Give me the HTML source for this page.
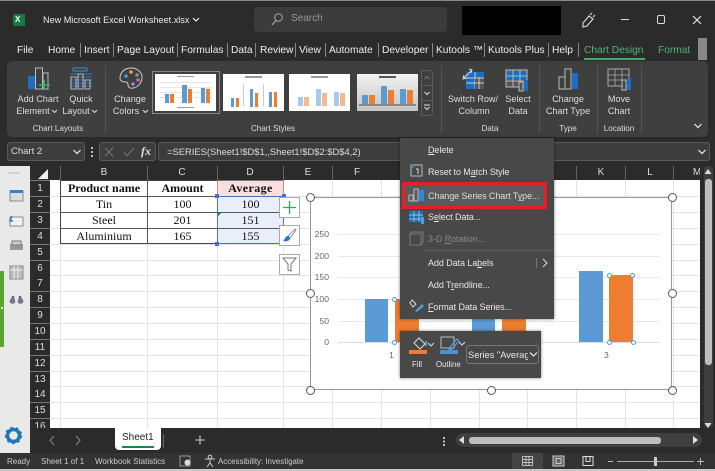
<!DOCTYPE html>
<html><head><meta charset="utf-8"><style>
*{box-sizing:border-box}
html,body{margin:0;padding:0}
body{width:715px;height:471px;overflow:hidden;position:relative;background:#2b2b2b;font-family:"Liberation Sans",sans-serif;color:#e8e8e8}
div,span,svg{position:absolute}
.t{white-space:nowrap;font-size:9px;line-height:12px}
.tab{white-space:nowrap;font-size:10.2px;line-height:13px;top:44px;color:#eee}
.sep{width:1px;height:14px;top:43px;background:#888}
.rs{width:1px;background:#555;top:65px;height:68px}
.lb{white-space:nowrap;font-size:8.1px;line-height:12px;top:123px;color:#ddd;transform:translateX(-50%)}
.rl{white-space:nowrap;font-size:9.1px;line-height:12px;color:#ddd;text-align:center;transform:translateX(-50%)}
.rh{left:30px;width:20px;height:15px;background:#2b2b2b;color:#ddd;text-align:center;font-size:10px;line-height:15px}
.ch{top:166px;font-size:10px;line-height:14px;color:#ddd;transform:translateX(-50%)}
.cs{top:166px;width:1px;height:14px;background:#666}
.hg{left:50px;width:650px;height:1px;background:#e4e4e4}
.vg{top:180px;width:1px;height:248px;background:#e4e4e4}
.cell{font-family:"Liberation Serif",serif;color:#111;font-size:12px;line-height:15px;text-align:center;height:16px;white-space:nowrap}
.h{font-weight:bold}
.bl{background:#5b9bd5}.or{background:#ed7d31}
.hd{width:9px;height:9px;border-radius:50%;background:#fff;border:1.5px solid #555}
.sd{width:5px;height:5px;border-radius:50%;background:#fff;border:1px solid #4a9fe0}
.ax{font-size:8.6px;line-height:11px;color:#666;text-align:right;width:24px;left:305px}
.gl{left:338px;width:322px;height:1px;background:#e8e8e8}
.mi{left:428px;font-size:9px;letter-spacing:-.08px;line-height:12px;color:#e6e6e6;white-space:nowrap}
.th{top:74px;height:37px;width:61px;background:#fff;overflow:hidden}
.g{height:1px;left:5px;width:52px;background:#e6e6e6}
.tt{left:22px;top:2px;width:17px;height:1px;background:#999}
u{text-decoration:underline}
</style></head><body>
<div style="left:0;top:0;width:715px;height:1px;background:#888"></div>
<!-- title -->
<div style="left:13px;top:14px;width:12px;height:12px;background:#107c41;border-radius:1px"></div>
<div class="t" style="left:15px;top:14px;font-size:8px;font-weight:bold;color:#fff">X</div>
<div class="t" style="left:43px;top:14px;font-size:9.1px;color:#ececec">New Microsoft Excel Worksheet.xlsx</div>
<svg style="left:191px;top:16px" width="10" height="8"><path d="M2 2l3 3 3-3" fill="none" stroke="#eee" stroke-width="1.2"/></svg>
<div style="left:254px;top:7px;width:193px;height:25px;background:#3b3b3b;border-radius:4px"></div>
<svg style="left:270px;top:12px" width="14" height="15"><circle cx="8.500" cy="5.500" r="3.800" fill="none" stroke="#aaa"/><path d="M6 8.500l-4 4.500" stroke="#aaa" stroke-width="1.200"/></svg>
<div class="t" style="left:291px;top:13px;font-size:10px;color:#999">Search</div>
<div style="left:462px;top:6px;width:99px;height:29px;background:#000"></div>
<svg style="left:580px;top:12px" width="16" height="16"><path d="M3 11l6-7 4 3-6 7-4 1zM10 3l2-2M13 5l2-2" fill="none" stroke="#ddd" stroke-width="1.100"/></svg>
<div style="left:621px;top:19px;width:8px;height:1px;background:#ddd"></div>
<div style="left:657px;top:15px;width:8px;height:9px;border:1.200px solid #ddd;border-radius:2px"></div>
<svg style="left:692px;top:15px" width="10" height="10"><path d="M1 1l8 8M9 1l-8 8" stroke="#eee" stroke-width="1.100"/></svg>
<!-- tabs -->
<div class="tab" style="left:17px">File</div><div class="tab" style="left:48px">Home</div><div class="sep" style="left:80px"></div>
<div class="tab" style="left:84px">Insert</div><div class="sep" style="left:113px"></div>
<div class="tab" style="left:117px">Page Layout</div><div class="sep" style="left:177px"></div>
<div class="tab" style="left:181px">Formulas</div><div class="sep" style="left:227px"></div>
<div class="tab" style="left:231px">Data</div><div class="sep" style="left:255px"></div>
<div class="tab" style="left:260px">Review</div><div class="sep" style="left:295px"></div>
<div class="tab" style="left:299px">View</div><div class="sep" style="left:325px"></div>
<div class="tab" style="left:329px">Automate</div><div class="sep" style="left:378px"></div>
<div class="tab" style="left:382px">Developer</div><div class="sep" style="left:432px"></div>
<div class="tab" style="left:436px">Kutools ™</div><div class="sep" style="left:484px"></div>
<div class="tab" style="left:488px">Kutools Plus</div><div class="sep" style="left:548px"></div>
<div class="tab" style="left:552px">Help</div><div class="sep" style="left:578px"></div>
<div class="tab" style="left:584px;color:#4fb477">Chart Design</div>
<div style="left:584px;top:58px;width:61px;height:2px;background:#45a86c"></div>
<div class="tab" style="left:658px;color:#4fb477">Format</div>
<div style="left:698px;top:38px;width:9px;height:22px;background:#888"></div>
<!-- ribbon -->
<div style="left:7px;top:61px;width:701px;height:76px;background:#3f3f3f;border-radius:6px"></div>
<div class="rs" style="left:105px"></div><div class="rs" style="left:441px"></div><div class="rs" style="left:539px"></div><div class="rs" style="left:597px"></div><div class="rs" style="left:641px"></div>
<!-- ribbon icons -->
<svg style="left:26px;top:66px" width="26" height="26"><rect x="2" y="10" width="7" height="13" fill="#1a6fc4"/><rect x="9.500" y="2" width="7" height="21" fill="none" stroke="#bbb"/><rect x="17" y="7" width="5" height="16" fill="none" stroke="#bbb"/><path d="M18 14v10M13 19h11" stroke="#3cb371" stroke-width="1.600"/></svg>
<svg style="left:68px;top:66px" width="26" height="26"><rect x="5" y="2" width="14" height="3" fill="none" stroke="#3b8fdc"/><path d="M2 8h22M2 11h22M2 14h22M2 17h22M2 20h22" stroke="#2e7ec9" stroke-width=".9"/><rect x="3" y="11" width="5" height="12" fill="none" stroke="#bbb"/><rect x="10" y="8" width="5" height="15" fill="none" stroke="#bbb"/><rect x="17" y="14" width="5" height="9" fill="none" stroke="#bbb"/></svg>
<svg style="left:118px;top:66px" width="26" height="26"><path d="M13 2C6 2 2 7 2 12c0 4 4 4 6 4 2 0 2 2 2 3 0 2 2 4 5 3 6-1 9-6 9-11 0-5-5-9-11-9z" fill="none" stroke="#ccc"/><circle cx="8" cy="10" r="1.800" fill="#4a9fe0"/><circle cx="13" cy="6" r="1.800" fill="#f0a040"/><circle cx="19" cy="9" r="1.800" fill="#60b060"/><circle cx="20" cy="14" r="1.800" fill="#d060c0"/><circle cx="15" cy="18" r="1.800" fill="#b070e0"/></svg>
<div class="rl" style="left:38px;top:93px">Add Chart</div><div class="rl" style="left:33px;top:105px">Element</div>
<svg style="left:51px;top:109px" width="7" height="5"><path d="M1 1l2.500 2.500L6 1" fill="none" stroke="#ddd"/></svg>
<div class="rl" style="left:81px;top:93px">Quick</div><div class="rl" style="left:76px;top:105px">Layout</div>
<svg style="left:91px;top:109px" width="7" height="5"><path d="M1 1l2.500 2.500L6 1" fill="none" stroke="#ddd"/></svg>
<div class="rl" style="left:130px;top:93px">Change</div><div class="rl" style="left:126px;top:105px">Colors</div>
<svg style="left:142px;top:109px" width="7" height="5"><path d="M1 1l2.500 2.500L6 1" fill="none" stroke="#ddd"/></svg>
<div class="lb" style="left:58px">Chart Layouts</div><div class="lb" style="left:273px">Chart Styles</div><div class="lb" style="left:490px">Data</div><div class="lb" style="left:568px">Type</div><div class="lb" style="left:619px">Location</div>
<!-- gallery -->
<div style="left:152px;top:71px;width:68px;height:43px;border:1.500px solid #888"></div>
<div class="th" style="left:155px"><span class="tt"></span><span class="g" style="top:8px"></span><span class="g" style="top:13px"></span><span class="g" style="top:18px"></span><span class="g" style="top:23px"></span><span class="bl" style="left:10px;top:20px;width:4px;height:9px"></span><span class="or" style="left:15px;top:20px;width:4px;height:9px"></span><span class="bl" style="left:27px;top:11px;width:5px;height:18px"></span><span class="or" style="left:33px;top:15px;width:4px;height:14px"></span><span class="bl" style="left:46px;top:14px;width:4px;height:15px"></span><span class="or" style="left:51px;top:15px;width:4px;height:14px"></span><span class="tt" style="top:33px"></span></div>
<div class="th" style="left:223px"><span class="tt" style="height:2px"></span><span style="left:20px;top:10px;width:1px;height:22px;background:#ccc"></span><span style="left:40px;top:10px;width:1px;height:22px;background:#ccc"></span><span class="bl" style="left:8px;top:24px;width:3px;height:9px"></span><span class="or" style="left:13px;top:24px;width:3px;height:9px"></span><span class="bl" style="left:27px;top:15px;width:3px;height:18px"></span><span class="or" style="left:32px;top:19px;width:3px;height:14px"></span><span class="bl" style="left:46px;top:18px;width:3px;height:15px"></span><span class="or" style="left:51px;top:18px;width:3px;height:15px"></span></div>
<div class="th" style="left:289px"><span class="tt" style="height:2px"></span><span style="left:9px;top:23px;width:5px;height:9px;background:#a8cbea"></span><span style="left:15px;top:23px;width:5px;height:9px;background:#f5b98c"></span><span style="left:27px;top:15px;width:5px;height:17px;background:#a8cbea"></span><span style="left:33px;top:19px;width:5px;height:13px;background:#f5b98c"></span><span style="left:45px;top:18px;width:5px;height:14px;background:#a8cbea"></span><span style="left:51px;top:19px;width:5px;height:13px;background:#f5b98c"></span></div>
<div class="th" style="left:357px;background:linear-gradient(#f2f2f2,#c4c4c4)"><span class="tt" style="height:2px;background:#555"></span><span class="bl" style="left:5px;top:21px;width:6px;height:9px"></span><span class="or" style="left:12px;top:21px;width:6px;height:9px"></span><span class="bl" style="left:24px;top:12px;width:6px;height:18px"></span><span class="or" style="left:31px;top:16px;width:6px;height:14px"></span><span class="bl" style="left:43px;top:15px;width:6px;height:15px"></span><span class="or" style="left:50px;top:16px;width:6px;height:14px"></span><span style="left:2px;top:30px;width:57px;height:2px;background:#888"></span></div>
<div style="left:421px;top:70px;width:12px;height:46px;border:1px solid #5c5c5c;border-radius:0 4px 4px 0"></div>
<div style="left:421px;top:85px;width:12px;height:1px;background:#5c5c5c"></div><div style="left:421px;top:100px;width:12px;height:1px;background:#5c5c5c"></div>
<svg style="left:421px;top:72px" width="12" height="44"><path d="M3.500 7l2.500-2.500 2.500 2.500" fill="none" stroke="#777"/><path d="M3.500 20l2.500 2.500 2.500-2.500" fill="none" stroke="#ddd"/><path d="M3 33h6M3.500 35l2.500 2.500 2.500-2.500" fill="none" stroke="#ddd"/></svg>
<svg style="left:461px;top:66px" width="26" height="26"><rect x="5" y="6" width="18" height="17" fill="#1a6fc4"/><path d="M5 12h18M5 17h18M14 6v17" stroke="#ccc"/><rect x="14" y="12" width="9" height="11" fill="#555"/><path d="M14 12h9M14 17h9M18 12v11" stroke="#ccc" fill="none"/><path d="M3 12l8-8M8 3l3 1-1 3M3 9l-1 4 4-1" fill="none" stroke="#ddd"/></svg>
<svg style="left:505px;top:68px" width="26" height="24"><rect x="1" y="2" width="21" height="17" fill="#555" stroke="#bbb"/><rect x="2" y="3" width="19" height="9" fill="#1a6fc4"/><path d="M1 8h21M1 13h21M8 2v17M15 2v17" stroke="#ccc" stroke-width=".8"/><rect x="14" y="14" width="4" height="9" fill="#555" stroke="#bbb"/><rect x="19" y="12" width="4" height="11" fill="#1a6fc4"/></svg>
<svg style="left:557px;top:67px" width="24" height="24"><rect x="2" y="10" width="6" height="12" fill="none" stroke="#bbb"/><rect x="8" y="2" width="6" height="20" fill="none" stroke="#bbb"/><rect x="15" y="6" width="6" height="16" fill="#1a6fc4"/></svg>
<svg style="left:607px;top:67px" width="26" height="25"><rect x="1" y="2" width="21" height="17" fill="none" stroke="#aaa"/><path d="M1 8h21M1 13h21M8 2v17M15 2v17" stroke="#aaa" stroke-width=".8"/><rect x="15" y="13" width="4" height="10" fill="#444" stroke="#bbb"/><rect x="20" y="11" width="4" height="12" fill="#1a6fc4"/></svg>
<div class="rl" style="left:473px;top:93px">Switch Row/</div><div class="rl" style="left:474px;top:105px">Column</div>
<div class="rl" style="left:518px;top:93px">Select</div><div class="rl" style="left:518px;top:105px">Data</div>
<div class="rl" style="left:568px;top:93px">Change</div><div class="rl" style="left:568px;top:105px">Chart Type</div>
<div class="rl" style="left:619px;top:93px">Move</div><div class="rl" style="left:619px;top:105px">Chart</div>
<svg style="left:693px;top:122px" width="10" height="8"><path d="M1.500 2l3.500 3.500L8.500 2" fill="none" stroke="#eee" stroke-width="1.200"/></svg>
<!-- formula bar -->
<div style="left:0;top:137px;width:715px;height:29px;background:#2b2b2b"></div>
<div style="left:7px;top:142px;width:78px;height:19px;background:#3d3d3d;border:1px solid #5a5a5a;border-radius:3px"></div>
<div class="t" style="left:11px;top:146px;font-size:9.500px;color:#ddd">Chart 2</div>
<svg style="left:72px;top:148px" width="10" height="8"><path d="M1.500 2l3.500 3.500L8.500 2" fill="none" stroke="#eee" stroke-width="1.200"/></svg>
<div style="left:91px;top:147px;width:2px;height:2px;background:#bbb;box-shadow:0 4px #bbb,0 8px #bbb"></div>
<div style="left:99px;top:142px;width:57px;height:19px;background:#3d3d3d;border:1px solid #5a5a5a;border-radius:3px"></div>
<svg style="left:103px;top:146px" width="34" height="12"><path d="M2 2l8 8M10 2l-8 8" stroke="#777"/><path d="M21 6l3 4 7-8" fill="none" stroke="#777"/></svg>
<div class="t" style="left:141px;top:145px;font-family:'Liberation Serif',serif;font-style:italic;font-size:12px;color:#ddd;font-weight:bold">fx</div>
<div style="left:158px;top:142px;width:552px;height:19px;background:#3d3d3d;border:1px solid #5a5a5a;border-radius:3px"></div>
<div class="t" style="left:167px;top:146px;font-size:9.400px;color:#ddd">=SERIES(Sheet1!$D$1,,Sheet1!$D$2:$D$4,2)</div>
<svg style="left:697px;top:148px" width="10" height="8"><path d="M1.500 2l3.500 3.500L8.500 2" fill="none" stroke="#eee" stroke-width="1.200"/></svg>
<!-- grid -->
<div style="left:50px;top:180px;width:650px;height:248px;background:#fff"></div>
<div class="hg" style="top:196px"></div><div class="hg" style="top:212px"></div><div class="hg" style="top:228px"></div><div class="hg" style="top:244px"></div><div class="hg" style="top:260px"></div><div class="hg" style="top:275px"></div><div class="hg" style="top:291px"></div><div class="hg" style="top:307px"></div><div class="hg" style="top:323px"></div><div class="hg" style="top:339px"></div><div class="hg" style="top:355px"></div><div class="hg" style="top:371px"></div><div class="hg" style="top:386px"></div><div class="hg" style="top:402px"></div><div class="hg" style="top:418px"></div>
<div class="vg" style="left:60px"></div><div class="vg" style="left:147px"></div><div class="vg" style="left:217px"></div><div class="vg" style="left:283px"></div><div class="vg" style="left:332px"></div><div class="vg" style="left:381px"></div><div class="vg" style="left:430px"></div><div class="vg" style="left:479px"></div><div class="vg" style="left:527px"></div><div class="vg" style="left:576px"></div><div class="vg" style="left:625px"></div><div class="vg" style="left:673px"></div>
<!-- headers -->
<div style="left:30px;top:166px;width:670px;height:14px;background:#2b2b2b"></div>
<div style="left:30px;top:180px;width:20px;height:248px;background:#777"></div>
<svg style="left:38px;top:169px" width="11" height="11"><path d="M0 10L10 0v10z" fill="#eee"/></svg>
<div class="cs" style="left:60px"></div><div class="cs" style="left:147px"></div><div class="cs" style="left:217px"></div><div class="cs" style="left:283px"></div><div class="cs" style="left:332px"></div><div class="cs" style="left:576px"></div><div class="cs" style="left:625px"></div><div class="cs" style="left:673px"></div>
<div class="ch" style="left:104px">B</div><div class="ch" style="left:182px">C</div><div class="ch" style="left:250px">D</div><div class="ch" style="left:308px">E</div><div class="ch" style="left:357px">F</div><div class="ch" style="left:601px">K</div><div class="ch" style="left:650px">L</div><div class="ch" style="left:697px">M</div>
<div class="rh" style="top:181px">1</div><div class="rh" style="top:197px">2</div><div class="rh" style="top:213px">3</div><div class="rh" style="top:229px">4</div><div class="rh" style="top:245px">5</div><div class="rh" style="top:261px">6</div><div class="rh" style="top:276px">7</div><div class="rh" style="top:292px">8</div><div class="rh" style="top:308px">9</div><div class="rh" style="top:324px">10</div><div class="rh" style="top:340px">11</div><div class="rh" style="top:356px">12</div><div class="rh" style="top:372px">13</div><div class="rh" style="top:387px">14</div><div class="rh" style="top:403px">15</div><div class="rh" style="top:419px;height:9px;overflow:hidden">16</div>
<!-- side panel -->
<div style="left:0;top:166px;width:30px;height:287px;background:#e9e9e9"></div>
<div style="left:8px;top:172px;width:12px;height:2px;background:#d4d4d4"></div>
<div style="left:0;top:271px;width:4px;height:76px;background:#5ea52d"></div>
<div style="left:1px;top:307px;width:2px;height:2px;background:#fff"></div>
<svg style="left:7px;top:187px" width="20" height="120"><rect x="3" y="4" width="13" height="10" fill="#ddd" stroke="#8a8a8a"/><rect x="3" y="3" width="13" height="3" fill="#3d7cc9"/><rect x="3" y="30" width="13" height="9" fill="#f2f2f2" stroke="#8a8a8a"/><path d="M5 29l-2 5h3" fill="none" stroke="#2e7ec9" stroke-width="1.500"/><rect x="3" y="57" width="13" height="6" fill="#999"/><rect x="5" y="54" width="9" height="4" fill="#ccc" stroke="#777"/><rect x="3" y="79" width="13" height="13" fill="#bbb" stroke="#888"/><path d="M7 79v13M11 79v13M3 83h13" stroke="#eee"/><path d="M3 116l2-7h2l1 7zM11 116l1-7h2l2 7z" fill="#667"/><circle cx="5.500" cy="114" r="2.800" fill="#778"/><circle cx="13.500" cy="114" r="2.800" fill="#778"/></svg>
<svg style="left:4px;top:426px" width="19" height="19"><circle cx="9.500" cy="9.500" r="6" fill="none" stroke="#1f78b4" stroke-width="3.500"/><circle cx="9.500" cy="9.500" r="8" fill="none" stroke="#1f78b4" stroke-width="1.500" stroke-dasharray="2.500 3.200"/></svg>
<!-- table -->
<div style="left:217px;top:181px;width:67px;height:15px;background:#fadfdf"></div>
<div style="left:217px;top:196px;width:67px;height:48px;background:#e9eef8"></div>
<div style="left:60px;top:180px;width:224px;height:64px;border:1px solid #444"></div>
<div style="left:60px;top:196px;width:157px;height:1px;background:#555"></div><div style="left:60px;top:212px;width:224px;height:1px;background:#555"></div><div style="left:60px;top:228px;width:224px;height:1px;background:#555"></div>
<div style="left:147px;top:180px;width:1px;height:64px;background:#555"></div>
<div style="left:217px;top:180px;width:1px;height:16px;background:#e08a8a"></div><div style="left:283px;top:180px;width:1px;height:16px;background:#e08a8a"></div><div style="left:217px;top:180px;width:67px;height:1px;background:#777"></div>
<div style="left:217px;top:196px;width:67px;height:48px;border:1.500px solid #4472c4"></div>
<div class="cell h" style="left:61px;top:181px;width:86px">Product name</div><div class="cell h" style="left:148px;top:181px;width:69px">Amount</div><div class="cell h" style="left:218px;top:181px;width:65px;letter-spacing:.4px">Average</div>
<div class="cell" style="left:61px;top:197px;width:86px">Tin</div><div class="cell" style="left:148px;top:197px;width:69px">100</div><div class="cell" style="left:218px;top:197px;width:65px">100</div>
<div class="cell" style="left:61px;top:213px;width:86px">Steel</div><div class="cell" style="left:148px;top:213px;width:69px">201</div><div class="cell" style="left:218px;top:213px;width:65px">151</div>
<div class="cell" style="left:61px;top:229px;width:86px">Aluminium</div><div class="cell" style="left:148px;top:229px;width:69px">165</div><div class="cell" style="left:218px;top:229px;width:65px">155</div>
<svg style="left:218px;top:212px" width="5" height="5"><path d="M0 0h4L0 4z" fill="#107c41"/></svg>
<div style="left:215px;top:194px;width:4px;height:4px;background:#4472c4"></div><div style="left:282px;top:194px;width:4px;height:4px;background:#4472c4"></div><div style="left:215px;top:242px;width:4px;height:4px;background:#4472c4"></div>
<!-- chart buttons -->
<div style="left:279px;top:197px;width:21px;height:21px;background:#fff;border:1px solid #aaa"></div>
<svg style="left:279px;top:197px" width="21" height="21"><path d="M10.500 4v13M4 10.500h13" stroke="#2fa84f" stroke-width="1.300"/></svg>
<div style="left:279px;top:225px;width:21px;height:21px;background:#fff;border:1px solid #aaa"></div>
<svg style="left:279px;top:225px" width="21" height="21"><path d="M16 4l-7 7 2 2 6-8z" fill="#fff" stroke="#777" stroke-width=".8"/><path d="M9 11c-3 0-3 4-5 5 3 1 7 0 7-3z" fill="#1f78d0"/></svg>
<div style="left:279px;top:254px;width:21px;height:21px;background:#fff;border:1px solid #aaa"></div>
<svg style="left:279px;top:254px" width="21" height="21"><path d="M4 4h13l-5 6v7l-3-1v-6z" fill="#fff" stroke="#777"/></svg>
<!-- chart -->
<div style="left:310px;top:197px;width:362px;height:193px;background:#fff;border:1px solid #999"></div>
<div class="gl" style="top:234px"></div><div class="gl" style="top:256px"></div><div class="gl" style="top:277px"></div><div class="gl" style="top:299px"></div><div class="gl" style="top:321px"></div><div class="gl" style="top:342px;background:#ddd"></div>
<div class="ax" style="top:229px">250</div><div class="ax" style="top:251px">200</div><div class="ax" style="top:272px">150</div><div class="ax" style="top:294px">100</div><div class="ax" style="top:316px">50</div><div class="ax" style="top:337px">0</div>
<div class="bl" style="left:365px;top:299px;width:23px;height:43px"></div><div class="or" style="left:395px;top:299px;width:24px;height:43px"></div>
<div class="bl" style="left:472px;top:300px;width:23px;height:42px"></div><div class="or" style="left:502px;top:300px;width:24px;height:42px"></div>
<div class="bl" style="left:579px;top:271px;width:24px;height:71px"></div><div class="or" style="left:609px;top:275px;width:24px;height:67px"></div>
<div class="t" style="left:389px;top:349px;font-size:8.600px;color:#666">1</div><div class="t" style="left:604px;top:349px;font-size:8.600px;color:#666">3</div>
<div class="hd" style="left:306px;top:193px"></div><div class="hd" style="left:668px;top:193px"></div><div class="hd" style="left:306px;top:289px"></div><div class="hd" style="left:668px;top:289px"></div><div class="hd" style="left:306px;top:386px"></div><div class="hd" style="left:487px;top:386px"></div><div class="hd" style="left:668px;top:386px"></div>
<div class="sd" style="left:392px;top:297px"></div><div class="sd" style="left:392px;top:340px"></div><div class="sd" style="left:607px;top:273px"></div><div class="sd" style="left:630px;top:273px"></div><div class="sd" style="left:607px;top:340px"></div><div class="sd" style="left:631px;top:340px"></div>
<!-- context menu -->
<div style="left:400px;top:138px;width:154px;height:181px;background:#484848;box-shadow:0 0 3px rgba(0,0,0,.5)"></div>
<div style="left:404px;top:184px;width:140px;height:23px;background:#5a5a5a"></div>
<div class="mi" style="top:144px"><u>D</u>elete</div>
<div class="mi" style="top:166px">Reset to M<u>a</u>tch Style</div>
<div class="mi" style="top:190px;color:#ddd">Change Series Chart T<u>y</u>pe...</div>
<div class="mi" style="top:211px">S<u>e</u>lect Data...</div>
<div class="mi" style="top:233px;color:#888">3-D <u>R</u>otation...</div>
<div style="left:425px;top:250px;width:129px;height:1px;background:#5f5f5f"></div>
<div class="mi" style="top:257px">Add Data La<u>b</u>els</div>
<div class="mi" style="top:279px">Add T<u>r</u>endline...</div>
<div class="mi" style="top:301px"><u>F</u>ormat Data Series...</div>
<div style="left:536px;top:258px;width:1px;height:10px;background:#777"></div>
<svg style="left:541px;top:258px" width="8" height="10"><path d="M2 1l4 4-4 4" fill="none" stroke="#ddd"/></svg>
<svg style="left:408px;top:163px" width="18" height="16"><rect x="3" y="2" width="11" height="11" fill="none" stroke="#bbb"/><path d="M6 1l-3 2 3 2" fill="none" stroke="#4a9fe0"/><path d="M8 6h2v5" fill="none" stroke="#ddd"/></svg>
<svg style="left:408px;top:187px" width="18" height="16"><rect x="1" y="8" width="4" height="6" fill="none" stroke="#bbb"/><rect x="6" y="2" width="4" height="12" fill="none" stroke="#bbb"/><rect x="11" y="3" width="5" height="11" fill="#2b88d8"/></svg>
<svg style="left:408px;top:209px" width="18" height="16"><rect x="1" y="2" width="14" height="11" fill="#1a6fc4"/><path d="M1 6h14M1 10h14M6 2v11M11 2v11" stroke="#ccc" stroke-width=".7"/><rect x="13" y="8" width="3" height="7" fill="#4a9fe0"/></svg>
<svg style="left:408px;top:231px" width="18" height="16"><rect x="2" y="3" width="11" height="11" fill="none" stroke="#777"/><path d="M2 3l2-2h11v10l-2 3" fill="none" stroke="#777"/></svg>
<svg style="left:408px;top:298px" width="18" height="16"><path d="M4 2l4 4-3 3-3-4z" fill="none" stroke="#ddd"/><path d="M7 13l7-7 2 2-7 6z" fill="#4a9fe0"/></svg>
<div style="left:402px;top:182px;width:145px;height:27px;border:3px solid #ed1c24"></div>
<!-- mini toolbar -->
<div style="left:400px;top:331px;width:141px;height:47px;background:#484848;box-shadow:0 0 3px rgba(0,0,0,.5)"></div>
<svg style="left:408px;top:335px" width="24" height="22"><path d="M6 8l5-5 6 6-5 5z" fill="none" stroke="#ddd"/><path d="M18 6v5" stroke="#4a9fe0" stroke-width="2"/><rect x="1" y="15" width="18" height="4" fill="#ed7d31"/></svg>
<svg style="left:427px;top:342px" width="8" height="6"><path d="M1 1l3 3 3-3" fill="none" stroke="#ddd"/></svg>
<svg style="left:439px;top:335px" width="24" height="22"><rect x="2" y="2" width="13" height="11" fill="none" stroke="#bbb"/><path d="M11 12l7-8 2 2-7 8-3 1z" fill="none" stroke="#4a9fe0" stroke-width="1.200"/><rect x="1" y="15" width="18" height="4" fill="#4a90d0"/></svg>
<svg style="left:458px;top:341px" width="8" height="6"><path d="M1 1l3 3 3-3" fill="none" stroke="#ddd"/></svg>
<div class="t" style="left:412px;top:359px;font-size:7.800px">Fill</div><div class="t" style="left:436px;top:359px;font-size:7.800px">Outline</div>
<div style="left:466px;top:345px;width:73px;height:19px;border:1px solid #777;border-radius:3px"></div>
<div class="t" style="left:468px;top:349px;width:60px;overflow:hidden;font-size:9.300px">Series "Average"</div>
<svg style="left:529px;top:351px" width="9" height="7"><path d="M1 1.500l3.500 3.500L8 1.500" fill="none" stroke="#eee" stroke-width="1.200"/></svg>
<!-- v scroll -->
<div style="left:700px;top:166px;width:15px;height:287px;background:#2b2b2b"></div>
<div style="left:704px;top:166px;width:9px;height:262px;background:#3f3f3f;border-radius:4px"></div>
<div style="left:705px;top:179px;width:7px;height:186px;background:#bdbdbd;border-radius:3px"></div>
<svg style="left:703px;top:168px" width="10" height="8"><path d="M1.500 6L5 1l3.500 5z" fill="#ddd"/></svg>
<svg style="left:703px;top:421px" width="10" height="8"><path d="M1.500 2L5 7l3.500-5z" fill="#ddd"/></svg>
<!-- sheet tabs -->
<div style="left:30px;top:428px;width:685px;height:25px;background:#2b2b2b"></div>
<svg style="left:46px;top:434px" width="40" height="13"><path d="M8 2L4 6.500 8 11" fill="none" stroke="#888"/><path d="M30 2l4 4.500L30 11" fill="none" stroke="#888"/></svg>
<div style="left:115px;top:428px;width:46px;height:22px;background:#fff;border-radius:0 0 4px 4px"></div>
<div class="t" style="left:122px;top:432px;font-size:10px;color:#222">Sheet1</div>
<div style="left:122px;top:446px;width:32px;height:2px;background:#1e8449"></div>
<div style="left:163px;top:434px;width:1px;height:14px;background:#666"></div>
<svg style="left:194px;top:434px" width="12" height="12"><path d="M6 1.500v9M1.500 6h9" stroke="#ccc" stroke-width="1.100"/></svg>
<div style="left:443px;top:437px;width:2px;height:2px;background:#bbb;box-shadow:0 3.500px #bbb,0 7px #bbb"></div>
<div style="left:456px;top:433px;width:246px;height:14px;background:#3f3f3f;border-radius:7px"></div>
<div style="left:469px;top:437px;width:192px;height:7px;background:#bdbdbd;border-radius:3px"></div>
<svg style="left:458px;top:435px" width="8" height="10"><path d="M6 1L1 5l5 4z" fill="#ddd"/></svg>
<svg style="left:691px;top:435px" width="8" height="10"><path d="M2 1l5 4-5 4z" fill="#ddd"/></svg>
<!-- status -->
<div style="left:0;top:453px;width:715px;height:16px;background:#333"></div>
<div style="left:0;top:469px;width:715px;height:2px;background:#c9c9c9"></div>
<div class="t" style="left:7px;top:456px;font-size:8px;color:#ccc">Ready</div>
<div class="t" style="left:41px;top:456px;font-size:8px;color:#ccc">Sheet 1 of 1</div>
<div class="t" style="left:95px;top:456px;font-size:8px;color:#ccc">Workbook Statistics</div>
<svg style="left:179px;top:454px" width="14" height="14"><rect x="1" y="2" width="10" height="10" fill="none" stroke="#999"/><circle cx="8.500" cy="8.500" r="3" fill="#ddd"/></svg>
<svg style="left:203px;top:454px" width="14" height="14"><circle cx="7" cy="3" r="1.800" fill="none" stroke="#ccc"/><path d="M2 5h10M7 6v3M4 13l3-4 3 4" fill="none" stroke="#ccc"/></svg>
<div class="t" style="left:218px;top:456px;font-size:7.900px;color:#ccc">Accessibility: Investigate</div>
<div style="left:512px;top:453px;width:31px;height:16px;background:#444"></div>
<svg style="left:521px;top:455px" width="75" height="12"><path d="M1.500 1.500h10v9h-10zM1.500 4.500h10M1.500 7.500h10M5 1.500v9M8 1.500v9" fill="none" stroke="#ddd" stroke-width=".8"/><rect x="32" y="1" width="11" height="10" fill="#666" stroke="#ccc"/><rect x="35" y="3.500" width="5" height="5" fill="none" stroke="#ccc"/><path d="M62 1.500h10v9H62zM65 1.500v5h4v-5" fill="none" stroke="#ddd"/></svg>
<div style="left:608px;top:461px;width:5px;height:1px;background:#bbb"></div>
<div style="left:617px;top:461px;width:77px;height:1px;background:#aaa"></div>
<div style="left:654px;top:457px;width:3px;height:9px;background:#ccc"></div>
<svg style="left:696px;top:457px" width="9" height="9"><path d="M4.500 1v7M1 4.500h7" stroke="#bbb"/></svg>
</body></html>
